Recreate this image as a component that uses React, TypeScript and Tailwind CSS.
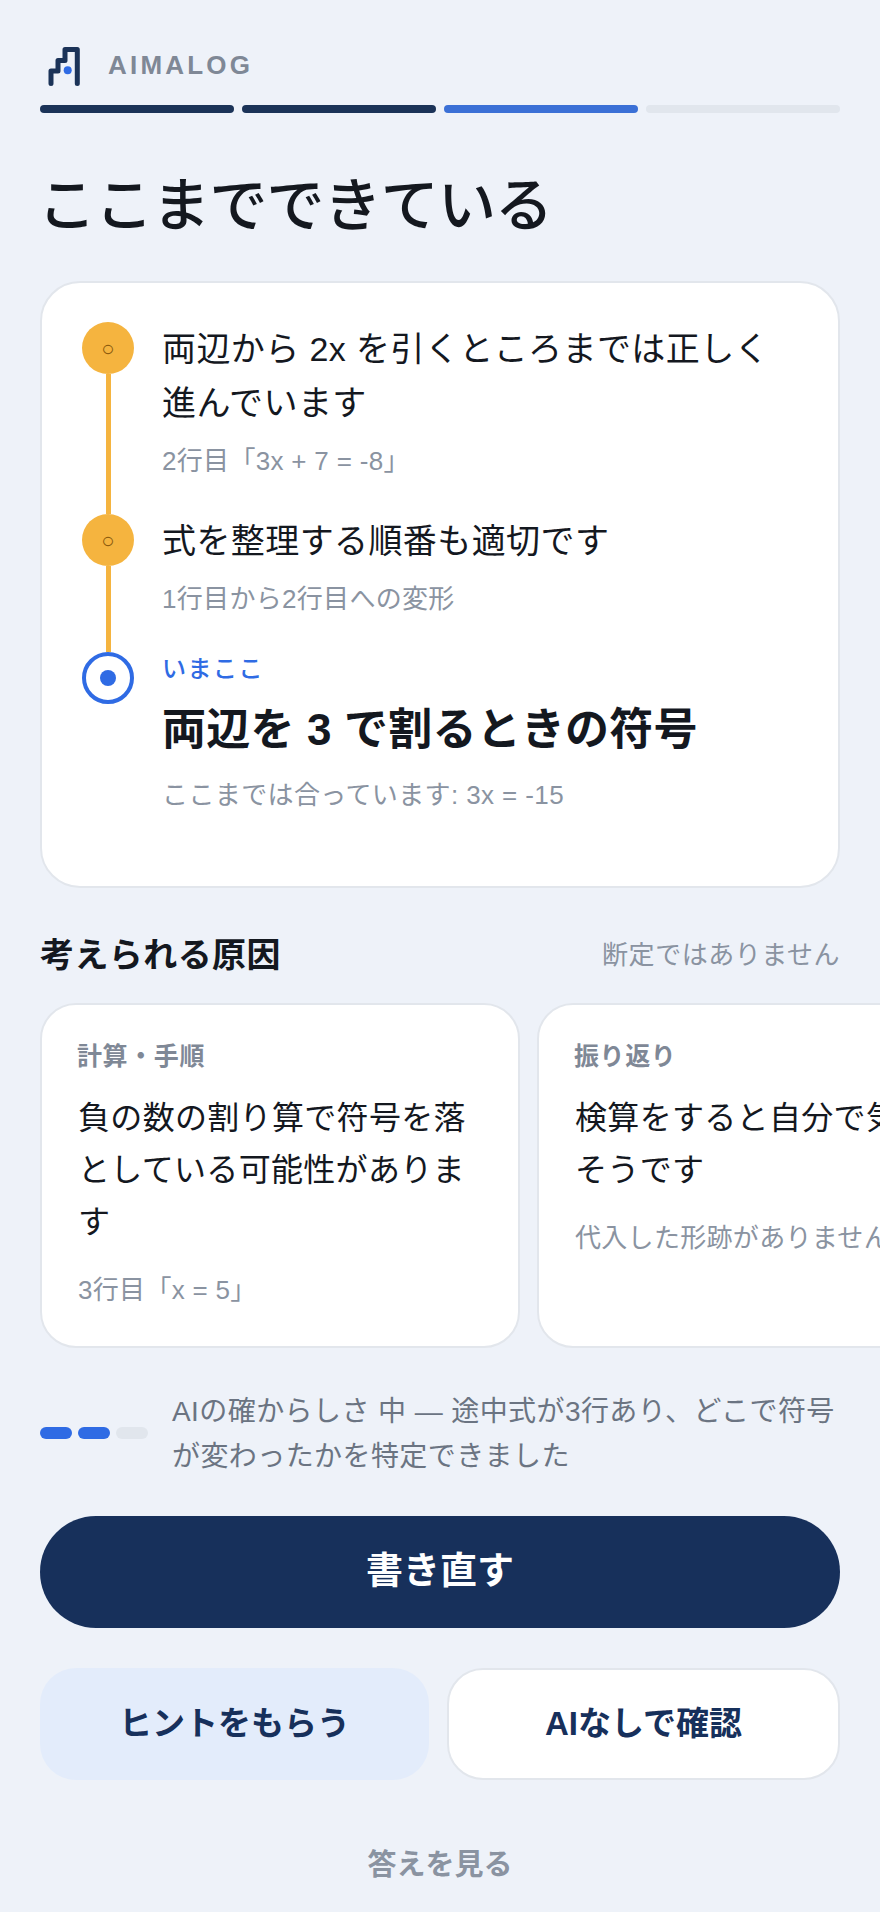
const FONT = "font-['Liberation_Sans','Noto_Sans_CJK_JP',sans-serif]";

const steps = [
    { text: "両辺から 2x を引くところまでは正しく進んでいます", note: "2行目「3x + 7 = -8」" },
    { text: "式を整理する順番も適切です", note: "1行目から2行目への変形" },
];

const causes = [
    {
        tag: "計算・手順",
        text: "負の数の割り算で符号を落としている可能性があります",
        note: "3行目「x = 5」",
    },
    {
        tag: "振り返り",
        text: "検算をすると自分で気づけそうです",
        note: "代入した形跡がありません",
    },
];

function Logo() {
    return (
        <svg width="36" height="40" viewBox="0 0 36 40" fill="none">
            <path
                d="M3 36.5V24H10V13.5H17V2.5H29.3V36.5"
                stroke="#1b3358"
                strokeWidth="5"
                strokeLinecap="round"
                strokeLinejoin="round"
            />
            <circle cx="19.7" cy="23.3" r="4" fill="#2f6be4" />
        </svg>
    );
}

function DoneStep({ text, note }: { text: string; note: string }) {
    return (
        <div className="flex gap-7">
            <div className="flex w-[52px] shrink-0 flex-col items-center">
                <div className="flex h-[52px] w-[52px] items-center justify-center rounded-full bg-[#f5b43f] pt-[2px] text-[22px] leading-none text-[#8a5a0c]">
                    ○
                </div>
                <div className="w-[5px] flex-1 bg-[#f5b43f]" />
            </div>
            <div className="pb-[33px]">
                <p className="text-[34px] leading-[54px] tracking-[0.012em] text-[#14181f]">{text}</p>
                <p className="mt-3 text-[26px] leading-[39px] tracking-[0.012em] text-[#8a93a1]">{note}</p>
            </div>
        </div>
    );
}

function CauseCard({ tag, text, note }: { tag: string; text: string; note: string }) {
    return (
        <div className="h-[345px] w-[480px] shrink-0 rounded-[36px] border-2 border-[#e2e6ec] bg-white px-[36px] pt-[33px]">
            <p className="-ml-px whitespace-nowrap text-[25px] font-bold leading-[36px] tracking-[0.6px] text-[#7f8896]">{tag}</p>
            <p className="mt-[18px] text-[32px] leading-[52px] tracking-[0.01em] text-[#14181f]">{text}</p>
            <p className="mt-[23px] whitespace-nowrap text-[26px] leading-[39px] tracking-[0.012em] text-[#8a93a1]">{note}</p>
        </div>
    );
}

export default function App() {
    return (
        <div className={`${FONT} h-[1912px] w-[880px] overflow-hidden bg-[#eef2f9]`}>
            <div className="px-10 pt-[46px]">
                <div className="flex items-center gap-6">
                    <div className="pl-2">
                        <Logo />
                    </div>
                    <span className="mb-[2px] text-[26px] font-bold tracking-[3.2px] text-[#7f8896]">AIMALOG</span>
                </div>
                <div className="mt-[18px] flex gap-2">
                    <div className="h-2 flex-1 rounded-full bg-[#1b3358]" />
                    <div className="h-2 flex-1 rounded-full bg-[#1b3358]" />
                    <div className="h-2 flex-1 rounded-full bg-[#3b70d6]" />
                    <div className="h-2 flex-1 rounded-full bg-[#e1e6ed]" />
                </div>
                <h1 className="mt-[53px] -ml-[2px] text-[58px] font-medium leading-[80px] tracking-[-0.015em] text-[#14181f]">ここまでできている</h1>

                <div className="mt-[35px] h-[607px] rounded-[40px] border-2 border-[#e2e6ec] bg-white px-10 pt-[39px]">
                    {steps.map((s) => (
                        <DoneStep key={s.note} text={s.text} note={s.note} />
                    ))}
                    <div className="flex gap-7">
                        <div className="flex h-[52px] w-[52px] shrink-0 items-center justify-center rounded-full border-4 border-[#2f6be4] bg-white">
                            <div className="h-4 w-4 rounded-full bg-[#2f6be4]" />
                        </div>
                        <div className="pt-px">
                            <p className="text-[24px] font-medium leading-[32px] tracking-[1.5px] text-[#2f6be4]">いまここ</p>
                            <p className="mt-[14px] text-[44px] font-bold leading-[62px] tracking-[0.2px] text-[#14181f]">両辺を 3 で割るときの符号</p>
                            <p className="mt-[15px] text-[26px] leading-[39px] tracking-[0.015em] text-[#8a93a1]">ここまでは合っています: 3x = -15</p>
                        </div>
                    </div>
                </div>

                <div className="mt-[42px] flex items-center justify-between">
                    <h2 className="text-[34px] font-bold leading-[50px] tracking-[0.012em] text-[#14181f]">考えられる原因</h2>
                    <span className="text-[26px] leading-[39px] tracking-[0.02em] text-[#8a93a1]">断定ではありません</span>
                </div>
            </div>

            <div className="mt-[23px] flex gap-[17px] overflow-hidden pl-10">
                {causes.map((c) => (
                    <CauseCard key={c.tag} tag={c.tag} text={c.text} note={c.note} />
                ))}
            </div>

            <div className="px-10">
                <div className="mt-[41px] flex items-center gap-6">
                    <div className="mb-[2px] flex shrink-0 gap-[6px]">
                        <div className="h-3 w-8 rounded-full bg-[#2f6be4]" />
                        <div className="h-3 w-8 rounded-full bg-[#2f6be4]" />
                        <div className="h-3 w-8 rounded-full bg-[#e1e6ed]" />
                    </div>
                    <p className="text-[28px] leading-[45px] tracking-[0.015em] text-[#6b7482]">
                        AIの確からしさ 中 — 途中式が3行あり、どこで符号が変わったかを特定できました
                    </p>
                </div>

                <button className="mt-[37px] flex h-[112px] w-full items-center justify-center rounded-full bg-[#17305b] text-[37px] font-bold text-white">
                    書き直す
                </button>
                <div className="mt-10 flex gap-[18px]">
                    <button className="h-[112px] w-[389px] shrink-0 rounded-[36px] bg-[#e3ecfb] text-[33px] font-bold text-[#17305b]">
                        ヒントをもらう
                    </button>
                    <button className="h-[112px] flex-1 rounded-[36px] border-2 border-[#e2e6ec] bg-white text-[33px] font-bold text-[#17305b]">
                        AIなしで確認
                    </button>
                </div>
                <p className="mt-[63px] text-center text-[29px] font-bold leading-[44px] text-[#8a93a1]">答えを見る</p>
            </div>
        </div>
    );
}
